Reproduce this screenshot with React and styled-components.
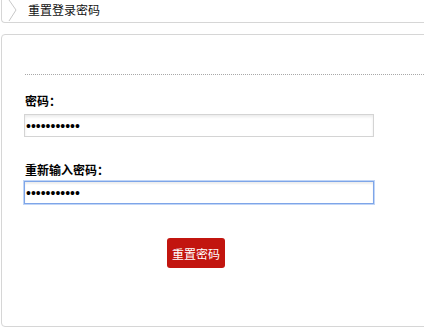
import React, { useEffect, useRef } from "react";
import styled, { createGlobalStyle } from "styled-components";

const GlobalStyle = createGlobalStyle`
  html, body {
    margin: 0;
    padding: 0;
    overflow: hidden;
    background: #fff;
  }
  body {
    font-family: "Liberation Sans", "Noto Sans CJK SC", sans-serif;
    font-size: 12px;
    color: #000;
  }
`;

const Page = styled.div`
  width: 424px;
  height: 330px;
  overflow: hidden;
  padding-left: 1px;
  box-sizing: border-box;
`;

const Crumb = styled.div`
  width: 480px;
  height: 22px;
  display: flex;
  align-items: center;
  border-left: 1px solid #d6d6d6;
  border-bottom: 1px solid #d6d6d6;
  border-bottom-left-radius: 4px;
`;

const Chevron = styled.svg`
  margin-left: 6px;
  flex-shrink: 0;
`;

const CrumbText = styled.span`
  margin-left: 10px;
  font-size: 12px;
  line-height: 22px;
  color: #111;
`;

const Panel = styled.div`
  width: 480px;
  height: 293px;
  margin-top: 11px;
  box-sizing: border-box;
  border: 1px solid #d6d6d6;
  border-radius: 4px;
  padding-left: 22px;
`;

const Divider = styled.div`
  margin-top: 39px;
  margin-left: 1px;
  border-top: 1px dotted #a8a8a8;
`;

const Label = styled.label`
  display: block;
  margin-top: ${(p) => p.$top}px;
  margin-left: 1px;
  font-size: 12px;
  line-height: 16px;
  font-weight: bold;
`;

const Field = styled.input`
  display: block;
  width: 350px;
  height: 23px;
  margin-top: ${(p) => p.$top}px;
  box-sizing: border-box;
  padding: 0 1px;
  font-family: "Liberation Sans", sans-serif;
  font-size: 14px;
  color: #000;
  background: #fff;
  border: 1px solid ${(p) => (p.$active ? "#7ea5e8" : "#d4d4d4")};
  box-shadow: ${(p) =>
    p.$active
      ? "0 0 0 1px rgba(140,178,240,0.55), inset 0 2px 2px rgba(0,0,0,0.07)"
      : "inset 0 2px 3px rgba(0,0,0,0.08)"};
  outline: none;
  border-radius: 0;
`;

const Submit = styled.button`
  display: block;
  width: 58px;
  height: 30px;
  margin-top: 34px;
  margin-left: 143px;
  padding: 0;
  border: none;
  border-radius: 3px;
  background: #c2150f;
  color: #fff;
  font-family: "Liberation Sans", "Noto Sans CJK SC", sans-serif;
  font-size: 12px;
  cursor: pointer;
`;

function App() {
  const confirmRef = useRef(null);

  useEffect(() => {
    const el = confirmRef.current;
    if (el) {
      el.focus();
      el.setSelectionRange(el.value.length, el.value.length);
    }
  }, []);

  return (
    <>
      <GlobalStyle />
      <Page>
        <Crumb>
          <Chevron width="10" height="22" viewBox="0 0 10 22">
            <polyline
              points="1,0 8,10 1,21"
              fill="none"
              stroke="#c8c8c8"
              strokeWidth="1"
            />
          </Chevron>
          <CrumbText>重置登录密码</CrumbText>
        </Crumb>
        <Panel>
          <Divider />
          <Label $top={19} htmlFor="pwd">
            密码：
          </Label>
          <Field id="pwd" type="password" $top={4} defaultValue="12345678901" />
          <Label $top={26} htmlFor="pwd2">
            重新输入密码：
          </Label>
          <Field
            id="pwd2"
            ref={confirmRef}
            type="password"
            $top={2}
            $active
            defaultValue="12345678901"
          />
          <Submit type="button">重置密码</Submit>
        </Panel>
      </Page>
    </>
  );
}

export default App;
